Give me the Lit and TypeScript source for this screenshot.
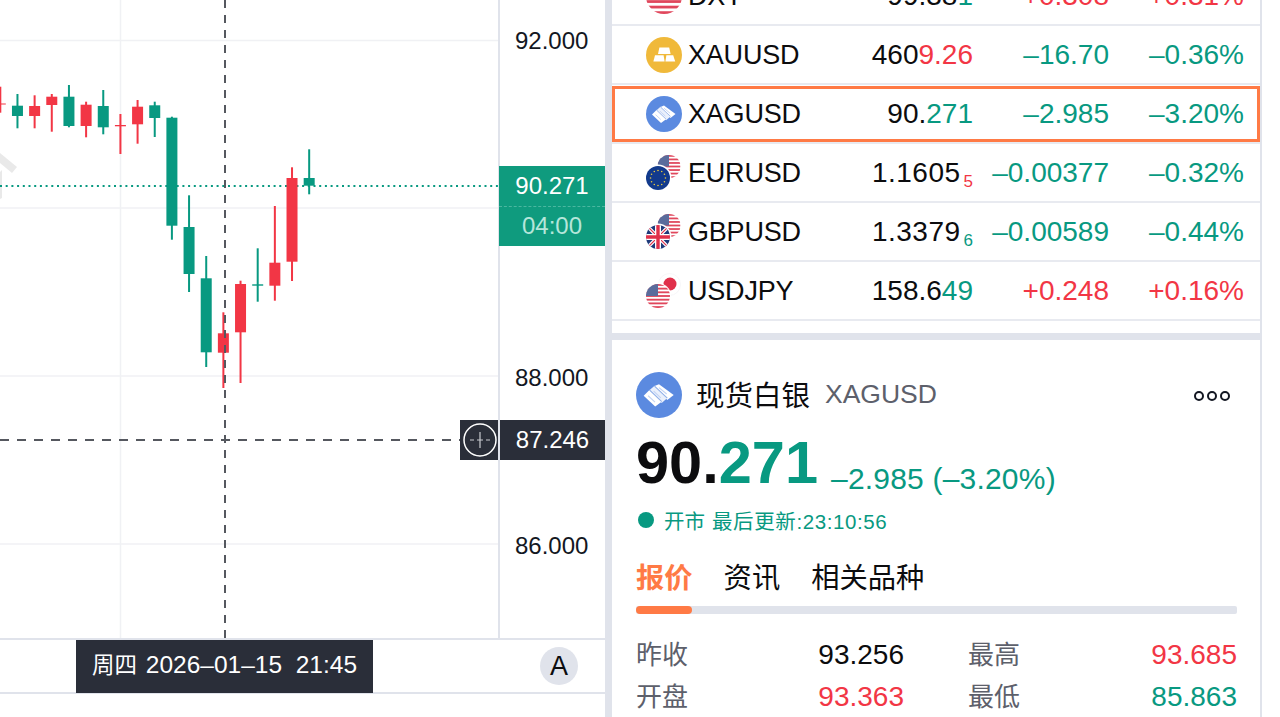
import {LitElement, html, css, svg} from 'lit';
import {customElement} from 'lit/decorators.js';

const GREEN = '#089981';
const RED = '#f23645';

// wick top, wick bottom, body top, body bottom, up (red here)
const candles: [number, number, number, number, boolean][] = [
    [86.7, 112.7, 103.5, 104.5, true],
    [94, 128.3, 105.7, 116, false],
    [95.3, 128.3, 106, 116, true],
    [94, 131.7, 96.7, 105, true],
    [85, 127.3, 96.7, 126, false],
    [101.7, 137.3, 104.7, 126, true],
    [90, 134.3, 106, 127.3, false],
    [114, 154, 125, 126.3, true],
    [100, 143.7, 106.7, 124.3, true],
    [101.7, 137, 105.3, 118, false],
    [116.7, 239.7, 117.7, 225.7, false],
    [195.3, 292, 227, 274, false],
    [256, 367, 278.3, 352.3, false],
    [312.3, 388, 333.3, 352.7, true],
    [280.7, 383, 284, 332.3, true],
    [248.3, 301.7, 284.3, 285.7, false],
    [206, 300.7, 262.7, 285.7, true],
    [167.3, 281, 178, 261.7, true],
    [149.3, 194.3, 178, 185.7, false],
];

const gridY = [40.5, 208, 376, 544];
const axisLabels = [
    {y: 41, text: '92.000'},
    {y: 378, text: '88.000'},
    {y: 546, text: '86.000'},
];

function usFlag(id: string, cx: number, cy: number, r: number) {
    const stripes = [];
    for (let i = 0; i < 7; i++) {
        stripes.push(svg`<rect x=${cx - r} y=${cy - r + (i * 2 * r) / 6.5} width=${2 * r} height=${r / 6.5} fill="#e0475c"></rect>`);
    }
    return svg`
        <clipPath id=${id}><circle cx=${cx} cy=${cy} r=${r}></circle></clipPath>
        <g clip-path="url(#${id})">
            <rect x=${cx - r} y=${cy - r} width=${2 * r} height=${2 * r} fill="#fff"></rect>
            ${stripes}
            <rect x=${cx - r} y=${cy - r} width=${r} height=${r} fill="#5a6c9c"></rect>
        </g>`;
}

function euFlag(cx: number, cy: number, r: number) {
    const dots = [];
    for (let i = 0; i < 12; i++) {
        const a = (i * Math.PI) / 6;
        dots.push(svg`<circle cx=${cx + Math.cos(a) * r * 0.62} cy=${cy + Math.sin(a) * r * 0.62} r="0.8" fill="#e8c840"></circle>`);
    }
    return svg`<circle cx=${cx} cy=${cy} r=${r} fill="#123a8c"></circle>${dots}`;
}

function gbFlag(cx: number, cy: number, r: number) {
    return svg`
        <clipPath id="gb"><circle cx=${cx} cy=${cy} r=${r}></circle></clipPath>
        <g clip-path="url(#gb)">
            <rect x=${cx - r} y=${cy - r} width=${2 * r} height=${2 * r} fill="#1f3a7a"></rect>
            <path d="M${cx - r} ${cy - r}L${cx + r} ${cy + r}M${cx + r} ${cy - r}L${cx - r} ${cy + r}" stroke="#fff" stroke-width="3.4"></path>
            <path d="M${cx - r} ${cy - r}L${cx + r} ${cy + r}M${cx + r} ${cy - r}L${cx - r} ${cy + r}" stroke="#e0304a" stroke-width="1.2"></path>
            <path d="M${cx} ${cy - r}V${cy + r}M${cx - r} ${cy}H${cx + r}" stroke="#fff" stroke-width="6"></path>
            <path d="M${cx} ${cy - r}V${cy + r}M${cx - r} ${cy}H${cx + r}" stroke="#e0304a" stroke-width="3.4"></path>
        </g>`;
}

const goldIcon = html`<svg viewBox="0 0 36 36"><circle cx="18" cy="18" r="18" fill="#f0b93a"></circle>
    <path d="M13.4 10.4h9.8l1.4 6.6H12z" fill="#fff"></path>
    <path d="M9 18.2h8.6l1 6.2H7.4z" fill="#fff"></path>
    <path d="M20.4 18.2h6.8l2 6.2H19.4z" fill="#fff"></path></svg>`;

// three silver bars lying side by side
const silverMark = svg`
    <path d="M14.5 11L18 9.6 29.5 18l-5 4z" fill="#fff"></path>
    <path d="M10.5 14.2l4-3.4 10 9.6-4.4 3.8z" fill="#eaf0fc"></path>
    <path d="M6 18.6l4.5-4.6 9.6 9.2L15 27z" fill="#fff"></path>
    <path d="M14.5 11l10 9.4M10.5 14l9.6 9.2" stroke="#8fafe8" stroke-width="0.8" fill="none"></path>
    <path d="M9.5 18.6l5.4 5M13.8 15l5.6 5.2M18 12.2l6 5" stroke="#c4d4f3" stroke-width="0.9" fill="none"></path>`;

const silverIcon = html`<svg viewBox="0 0 36 36"><circle cx="18" cy="18" r="18" fill="#5b8ae0"></circle>${silverMark}</svg>`;

const icons: Record<string, unknown> = {
    DXY: html`<svg viewBox="0 0 36 36">${usFlag('dx', 18, 18, 18)}</svg>`,
    XAUUSD: goldIcon,
    XAGUSD: silverIcon,
    EURUSD: html`<svg viewBox="0 0 36 36">${usFlag('eu1', 23, 11.5, 11.5)}<circle cx="12" cy="23" r="13.5" fill="#fff"></circle>${euFlag(12, 23, 12)}</svg>`,
    GBPUSD: html`<svg viewBox="0 0 36 36">${usFlag('gb1', 23, 11.5, 11.5)}<circle cx="12" cy="23" r="13.5" fill="#fff"></circle>${gbFlag(12, 23, 12)}</svg>`,
    USDJPY: html`<svg viewBox="0 0 36 36"><circle cx="23.5" cy="11.5" r="11" fill="#fff" stroke="#f1f2f5" stroke-width="0.6"></circle><circle cx="24" cy="11" r="6.5" fill="#e0304a"></circle><circle cx="12" cy="23" r="13" fill="#fff"></circle>${usFlag('jp1', 12, 23, 12)}</svg>`,
};

type Row = {name: string; head: string; tail: string; tailColor: string; small?: boolean; change: string; pct: string; color: string; active?: boolean};

const rows: Row[] = [
    {name: 'DXY', head: '99.38', tail: '1', tailColor: GREEN, change: '+0.308', pct: '+0.31%', color: RED},
    {name: 'XAUUSD', head: '460', tail: '9.26', tailColor: RED, change: '–16.70', pct: '–0.36%', color: GREEN},
    {name: 'XAGUSD', head: '90.', tail: '271', tailColor: GREEN, change: '–2.985', pct: '–3.20%', color: GREEN, active: true},
    {name: 'EURUSD', head: '1.1605', tail: '5', tailColor: RED, small: true, change: '–0.00377', pct: '–0.32%', color: GREEN},
    {name: 'GBPUSD', head: '1.3379', tail: '6', tailColor: GREEN, small: true, change: '–0.00589', pct: '–0.44%', color: GREEN},
    {name: 'USDJPY', head: '158.6', tail: '49', tailColor: GREEN, change: '+0.248', pct: '+0.16%', color: RED},
];

@customElement('app-root')
export class AppRoot extends LitElement {
    static styles = css`
        :host {
            display: block;
            width: 1280px;
            height: 717px;
            overflow: hidden;
            background: #fff;
            font-family: "Liberation Sans", "Noto Sans CJK SC", sans-serif;
            color: #0c0c0e;
        }
        .page { display: flex; width: 1280px; height: 717px; }

        .chart-col { width: 605px; flex: none; }
        .plot { display: flex; height: 638px; }
        .canvas { position: relative; width: 498px; flex: none; }
        .canvas svg { display: block; }
        .axis { position: relative; width: 107px; flex: none; border-left: 2px solid #e0e3eb; box-sizing: border-box; }
        .axis-label { position: absolute; left: 15px; font-size: 24px; line-height: 28px; transform: translateY(-50%); color: #131722; }
        .last {
            position: absolute; left: -1px; top: 166px; width: 106px; height: 80px;
            background: #0f9b7e;
            color: #fff; text-align: center; font-size: 24px;
        }
        .last div { height: 40px; line-height: 40px; }
        .last div + div { color: #b5e6da; border-top: 1px dashed #4bb7a0; height: 39px; line-height: 37px; }
        .cross-price {
            position: absolute; left: 0; top: 420px; width: 105px; height: 40px;
            background: #2a2e39; color: #fff; font-size: 24px;
            line-height: 40px; text-align: center;
        }
        .cross-btn {
            position: absolute; left: 460px; top: 420px; width: 38px; height: 40px;
            background: #2a2e39;
        }
        .cross-btn svg { display: block; }

        .timebar {
            position: relative; height: 56px; box-sizing: border-box;
            border-top: 2px solid #e0e3eb; border-bottom: 2px solid #e0e3eb;
        }
        .date {
            position: absolute; left: 76px; top: 0; width: 297px; height: 53px;
            background: #2a2e39; color: #fff; font-size: 24.5px; line-height: 49px;
            padding-left: 16px; box-sizing: border-box; white-space: pre;
        }
        .date span { font-size: 22.5px; margin-right: 2px; }
        .auto {
            position: absolute; left: 540px; top: 7px; width: 38px; height: 38px;
            border-radius: 50%; background: #e0e3eb; font-size: 27px;
            line-height: 38px; text-align: center;
        }

        .divider { width: 7px; flex: none; background: #e0e3eb; }
        .side { width: 648px; flex: none; border-right: 2px solid #e0e3eb; box-sizing: content-box; overflow: hidden; }

        .list { margin-top: -33px; height: 366px; border-bottom: 7px solid #e0e3eb; box-sizing: content-box; }
        .row {
            position: relative; display: flex; align-items: center;
            height: 59px; box-sizing: border-box; border-bottom: 2px solid #e8eaf0;
            font-size: 28px; padding-left: 34px; padding-top: 1px;
        }
        .row.active::after {
            content: ''; position: absolute; left: 0; right: 0; top: 1px; bottom: 0;
            border: 3px solid #ff7a45;
        }
        .row svg { width: 36px; height: 36px; flex: none; display: block; }
        .name { width: 172px; margin-left: 6px; flex: none; font-size: 27px; letter-spacing: -0.2px; }
        .price { width: 113px; flex: none; text-align: right; white-space: nowrap; }
        .price.split { letter-spacing: 0.5px; }
        .price small { font-size: 17px; margin-left: 3px; position: relative; top: 5px; letter-spacing: 0; }
        .change { width: 136px; flex: none; text-align: right; white-space: nowrap; }
        .pct { width: 135px; flex: none; text-align: right; white-space: nowrap; }

        .detail { padding: 32px 23px 0 24px; }
        .title { display: flex; align-items: center; height: 46px; }
        .title svg.logo { width: 46px; height: 46px; flex: none; display: block; }
        .title b { font-weight: 400; font-size: 28.5px; margin-left: 14px; padding-bottom: 3px; }
        .title span { font-size: 26.5px; color: #5d606b; margin-left: 15px; padding-bottom: 2px; }
        .dots { margin-left: auto; margin-right: 7px; margin-top: 2px; display: flex; gap: 3px; }
        .dots i { width: 6px; height: 6px; border: 2px solid #131722; border-radius: 50%; display: block; }
        .quote { display: flex; align-items: flex-start; height: 72px; margin-top: 9px; }
        .quote strong { font-size: 59.5px; font-weight: 700; line-height: 72px; }
        .quote em { font-style: normal; font-size: 30px; letter-spacing: 0.2px; line-height: 34px; margin: 35px 0 0 13px; color: #089981; }
        .status { display: flex; align-items: center; color: #089981; font-size: 20.5px; height: 28px; margin-top: 7px; }
        .status i { width: 16px; height: 16px; border-radius: 50%; background: #089981; margin: 0 10px 0 2px; }
        .status span + span { margin-left: 7px; letter-spacing: 0.6px; }
        .tabs { display: flex; gap: 31px; font-size: 28.3px; margin-top: 24px; height: 40px; line-height: 40px; }
        .tabs .on { color: #ff7a45; font-weight: 700; }
        .track { height: 8px; background: #e0e3eb; margin-top: 8px; border-radius: 2px; }
        .track div { width: 56px; height: 8px; background: #ff7a45; border-radius: 4px; }
        .stats { display: grid; grid-template-columns: 268px 333px; margin-top: 20px; font-size: 28px; line-height: 42px; }
        .stat { display: flex; justify-content: space-between; }
        .stat label { color: #5d606b; font-size: 26px; }
        .stat.right { margin-left: 64px; }
    `;

    renderCandles() {
        return candles.map(([wt, wb, bt, bb, up], i) => {
            const x = 0.3 + i * 17.16;
            const c = up ? RED : GREEN;
            return svg`
                <rect x=${x - 1} y=${wt} width="2" height=${wb - wt} fill=${c}></rect>
                <rect x=${x - 5.5} y=${bt} width="11" height=${bb - bt} fill=${c}></rect>`;
        });
    }

    renderCanvas() {
        return html`<svg width="498" height="638" viewBox="0 0 498 638">
            ${gridY.map(y => svg`<line x1="0" x2="498" y1=${y} y2=${y} stroke="#f0f1f4" stroke-width="1.5"></line>`)}
            <line x1="120.5" x2="120.5" y1="0" y2="638" stroke="#f0f1f4" stroke-width="1.5"></line>
            <polygon points="0,153 17,167 12,173 0,163" fill="#e9e9e9"></polygon>
            <polygon points="0,172 2,170 2,198 0,199" fill="#e9e9e9"></polygon>
            <line x1="0" x2="498" y1="186" y2="186" stroke=${GREEN} stroke-width="2" stroke-dasharray="2 3.7"></line>
            ${this.renderCandles()}
            <line x1="225" x2="225" y1="0" y2="638" stroke="#55585f" stroke-width="2" stroke-dasharray="8 7"></line>
            <line x1="0" x2="460" y1="440" y2="440" stroke="#55585f" stroke-width="2" stroke-dasharray="9 8"></line>
        </svg>`;
    }

    renderRow(r: Row) {
        return html`<div class="row ${r.active ? 'active' : ''}">
            ${icons[r.name]}
            <div class="name">${r.name}</div>
            <div class="price ${r.small ? 'split' : ''}">${r.head}${r.small
                ? html`<small style="color:${r.tailColor}">${r.tail}</small>`
                : html`<span style="color:${r.tailColor}">${r.tail}</span>`}</div>
            <div class="change" style="color:${r.color}">${r.change}</div>
            <div class="pct" style="color:${r.color}">${r.pct}</div>
        </div>`;
    }

    render() {
        return html`<div class="page">
            <div class="chart-col">
                <div class="plot">
                    <div class="canvas">
                        ${this.renderCanvas()}
                        <div class="cross-btn">
                            <svg width="38" height="40" viewBox="0 0 38 40">
                                <circle cx="20" cy="20" r="16" fill="none" stroke="#fff" stroke-width="1.5"></circle>
                                <path d="M20 12v16M10 20h4M17 20h6M26 20h4" stroke="#c8cad0" stroke-width="1.2"></path>
                            </svg>
                        </div>
                    </div>
                    <div class="axis">
                        ${axisLabels.map(a => html`<div class="axis-label" style="top:${a.y}px">${a.text}</div>`)}
                        <div class="last"><div>90.271</div><div>04:00</div></div>
                        <div class="cross-price">87.246</div>
                    </div>
                </div>
                <div class="timebar">
                    <div class="date"><span>周四</span> 2026–01–15  21:45</div>
                    <div class="auto">A</div>
                </div>
            </div>
            <div class="divider"></div>
            <div class="side">
                <div class="list">${rows.map(r => this.renderRow(r))}</div>
                <div class="detail">
                    <div class="title">
                        <svg class="logo" viewBox="0 0 36 36"><circle cx="18" cy="18" r="18" fill="#5b8ae0"></circle>${silverMark}</svg>
                        <b>现货白银</b><span>XAGUSD</span>
                        <div class="dots"><i></i><i></i><i></i></div>
                    </div>
                    <div class="quote">
                        <strong>90.<span style="color:${GREEN}">271</span></strong>
                        <em>–2.985 (–3.20%)</em>
                    </div>
                    <div class="status"><i></i><span>开市</span><span>最后更新:23:10:56</span></div>
                    <div class="tabs"><span class="on">报价</span><span>资讯</span><span>相关品种</span></div>
                    <div class="track"><div></div></div>
                    <div class="stats">
                        <div class="stat"><label>昨收</label><span>93.256</span></div>
                        <div class="stat right"><label>最高</label><span style="color:${RED}">93.685</span></div>
                        <div class="stat"><label>开盘</label><span style="color:${RED}">93.363</span></div>
                        <div class="stat right"><label>最低</label><span style="color:${GREEN}">85.863</span></div>
                    </div>
                </div>
            </div>
        </div>`;
    }
}
